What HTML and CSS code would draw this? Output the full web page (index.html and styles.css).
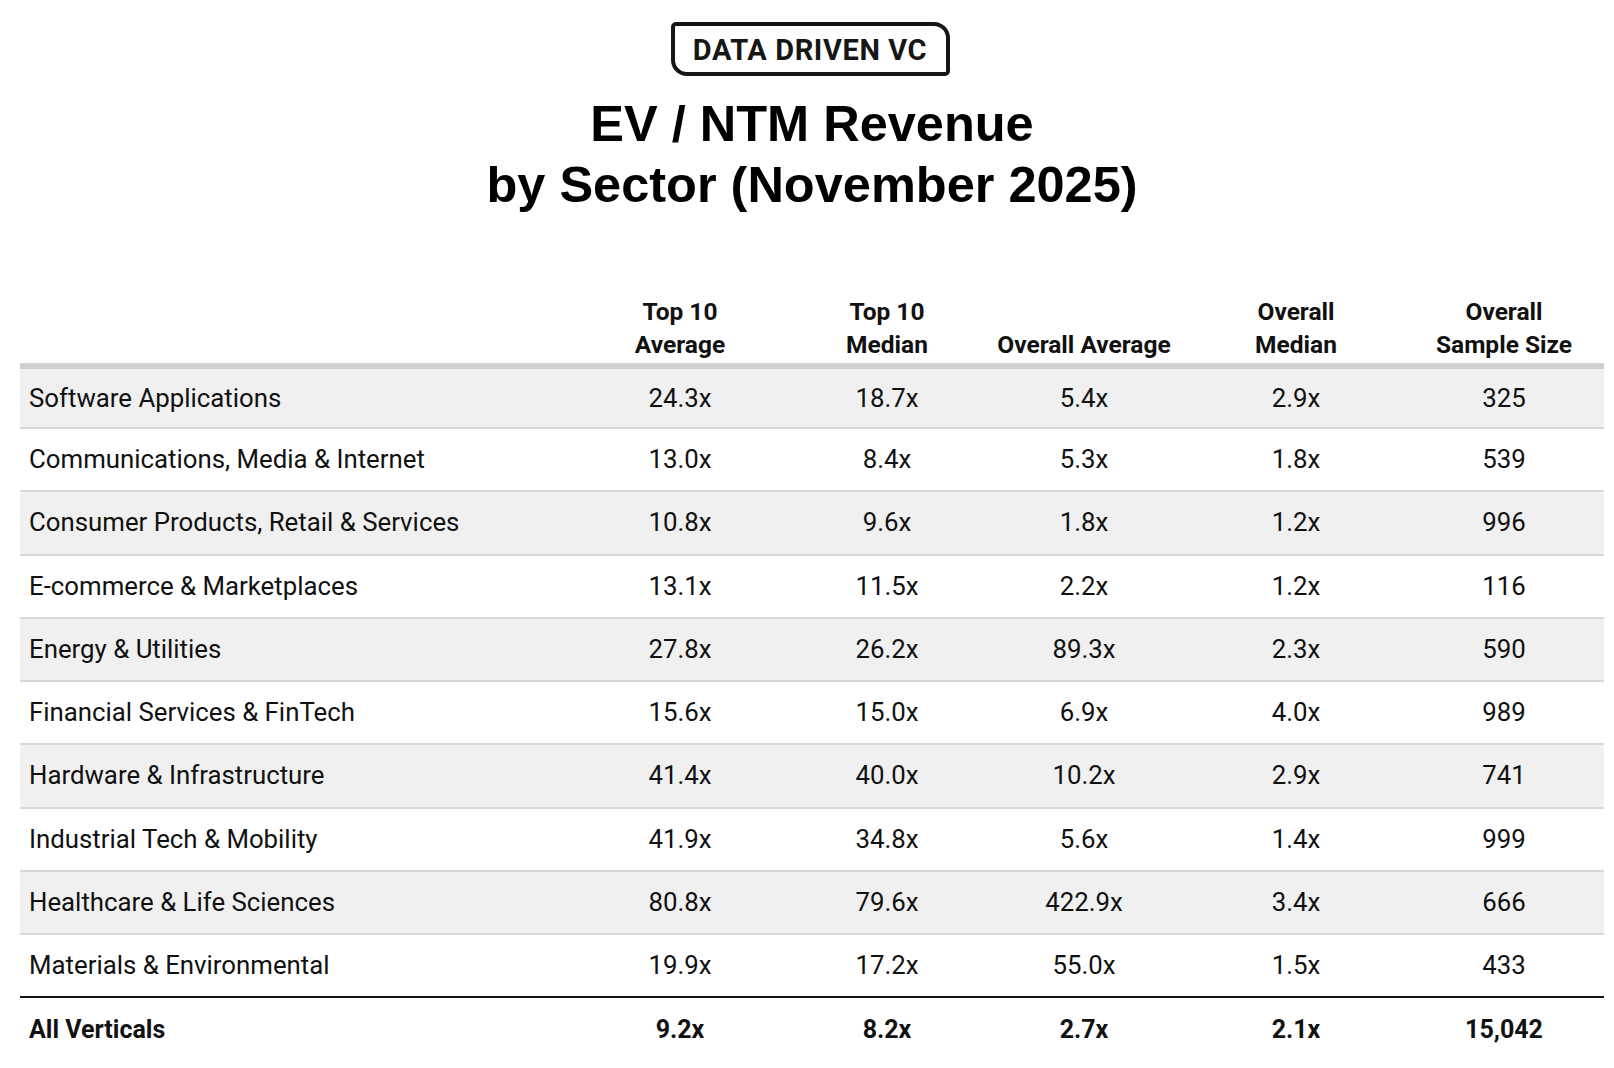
FILE: index.html
```html
<!DOCTYPE html>
<html lang="en">
<head>
<meta charset="utf-8">
<title>EV / NTM Revenue by Sector (November 2025)</title>
<link rel="stylesheet" href="styles.css">
</head>
<body>
<div class="page">
  <header class="head">
    <div class="logo">DATA DRIVEN VC</div>
    <h1 class="title">EV / NTM Revenue<br>by Sector (November 2025)</h1>
  </header>
  <table class="grid">
    <colgroup>
      <col class="c-name"><col class="c-a"><col class="c-b"><col class="c-c"><col class="c-d"><col class="c-e">
    </colgroup>
    <thead>
      <tr>
        <th class="name"></th>
        <th>Top 10<br>Average</th>
        <th>Top 10<br>Median</th>
        <th>Overall Average</th>
        <th>Overall<br>Median</th>
        <th>Overall<br>Sample Size</th>
      </tr>
    </thead>
    <tbody>
      <tr class="odd first"><td class="name">Software Applications</td><td>24.3x</td><td>18.7x</td><td>5.4x</td><td>2.9x</td><td>325</td></tr>
      <tr><td class="name">Communications, Media &amp; Internet</td><td>13.0x</td><td>8.4x</td><td>5.3x</td><td>1.8x</td><td>539</td></tr>
      <tr class="odd"><td class="name">Consumer Products, Retail &amp; Services</td><td>10.8x</td><td>9.6x</td><td>1.8x</td><td>1.2x</td><td>996</td></tr>
      <tr><td class="name">E-commerce &amp; Marketplaces</td><td>13.1x</td><td>11.5x</td><td>2.2x</td><td>1.2x</td><td>116</td></tr>
      <tr class="odd"><td class="name">Energy &amp; Utilities</td><td>27.8x</td><td>26.2x</td><td>89.3x</td><td>2.3x</td><td>590</td></tr>
      <tr><td class="name">Financial Services &amp; FinTech</td><td>15.6x</td><td>15.0x</td><td>6.9x</td><td>4.0x</td><td>989</td></tr>
      <tr class="odd"><td class="name">Hardware &amp; Infrastructure</td><td>41.4x</td><td>40.0x</td><td>10.2x</td><td>2.9x</td><td>741</td></tr>
      <tr><td class="name">Industrial Tech &amp; Mobility</td><td>41.9x</td><td>34.8x</td><td>5.6x</td><td>1.4x</td><td>999</td></tr>
      <tr class="odd"><td class="name">Healthcare &amp; Life Sciences</td><td>80.8x</td><td>79.6x</td><td>422.9x</td><td>3.4x</td><td>666</td></tr>
      <tr class="last"><td class="name">Materials &amp; Environmental</td><td>19.9x</td><td>17.2x</td><td>55.0x</td><td>1.5x</td><td>433</td></tr>
    </tbody>
    <tfoot>
      <tr><td class="name">All Verticals</td><td>9.2x</td><td>8.2x</td><td>2.7x</td><td>2.1x</td><td>15,042</td></tr>
    </tfoot>
  </table>
</div>
</body>
</html>
```

FILE: styles.css
```css
html, body {
  margin: 0;
  padding: 0;
  background: #ffffff;
}

.page {
  width: 1584px;
  margin-left: 20px;
  color: #111111;
}

.head {
  display: flex;
  flex-direction: column;
  align-items: center;
  padding-top: 22px;
}

.logo {
  box-sizing: border-box;
  width: 279px;
  height: 54px;
  margin-left: -4px;
  border: 4px solid #161616;
  border-radius: 5px 16px 5px 16px;
  display: flex;
  align-items: center;
  justify-content: center;
  font-family: Roboto, "Liberation Sans", sans-serif;
  font-weight: 700;
  font-size: 29px;
  letter-spacing: 0.6px;
  color: #161616;
  padding-top: 1px;
}

.title {
  margin: 17px 0 0 0;
  font-family: "Liberation Sans", Arial, sans-serif;
  font-weight: 700;
  font-size: 50.5px;
  line-height: 61px;
  text-align: center;
  color: #000000;
}

.grid {
  margin-top: 80px;
  width: 1584px;
  border-collapse: separate;
  border-spacing: 0;
  table-layout: fixed;
  font-family: Roboto, "Liberation Sans", sans-serif;
  color: #111111;
}

.c-name { width: 546px; }
.c-a { width: 228px; }
.c-b { width: 186px; }
.c-c { width: 208px; }
.c-d { width: 216px; }
.c-e { width: 200px; }

.grid th {
  font-weight: 700;
  font-size: 24.5px;
  line-height: 33px;
  text-align: center;
  vertical-align: bottom;
  padding: 0 0 2px 0;
  border-bottom: 6px solid #d0d0d0;
}

.grid td {
  font-size: 25.8px;
  line-height: 61.3px;
  text-align: center;
  padding: 0;
  border-bottom: 2px solid #d7d7d7;
  white-space: nowrap;
}

.grid td.name {
  text-align: left;
  padding-left: 9px;
}

.grid tr.odd td {
  background: #f0f0f0;
}

.grid tr.first td {
  line-height: 58px;
}

.grid tr.last td {
  line-height: 61px;
  border-bottom: 2px solid #111111;
}

.grid tfoot td {
  font-weight: 700;
  font-size: 25px;
  line-height: 64px;
  border-bottom: none;
}
```
